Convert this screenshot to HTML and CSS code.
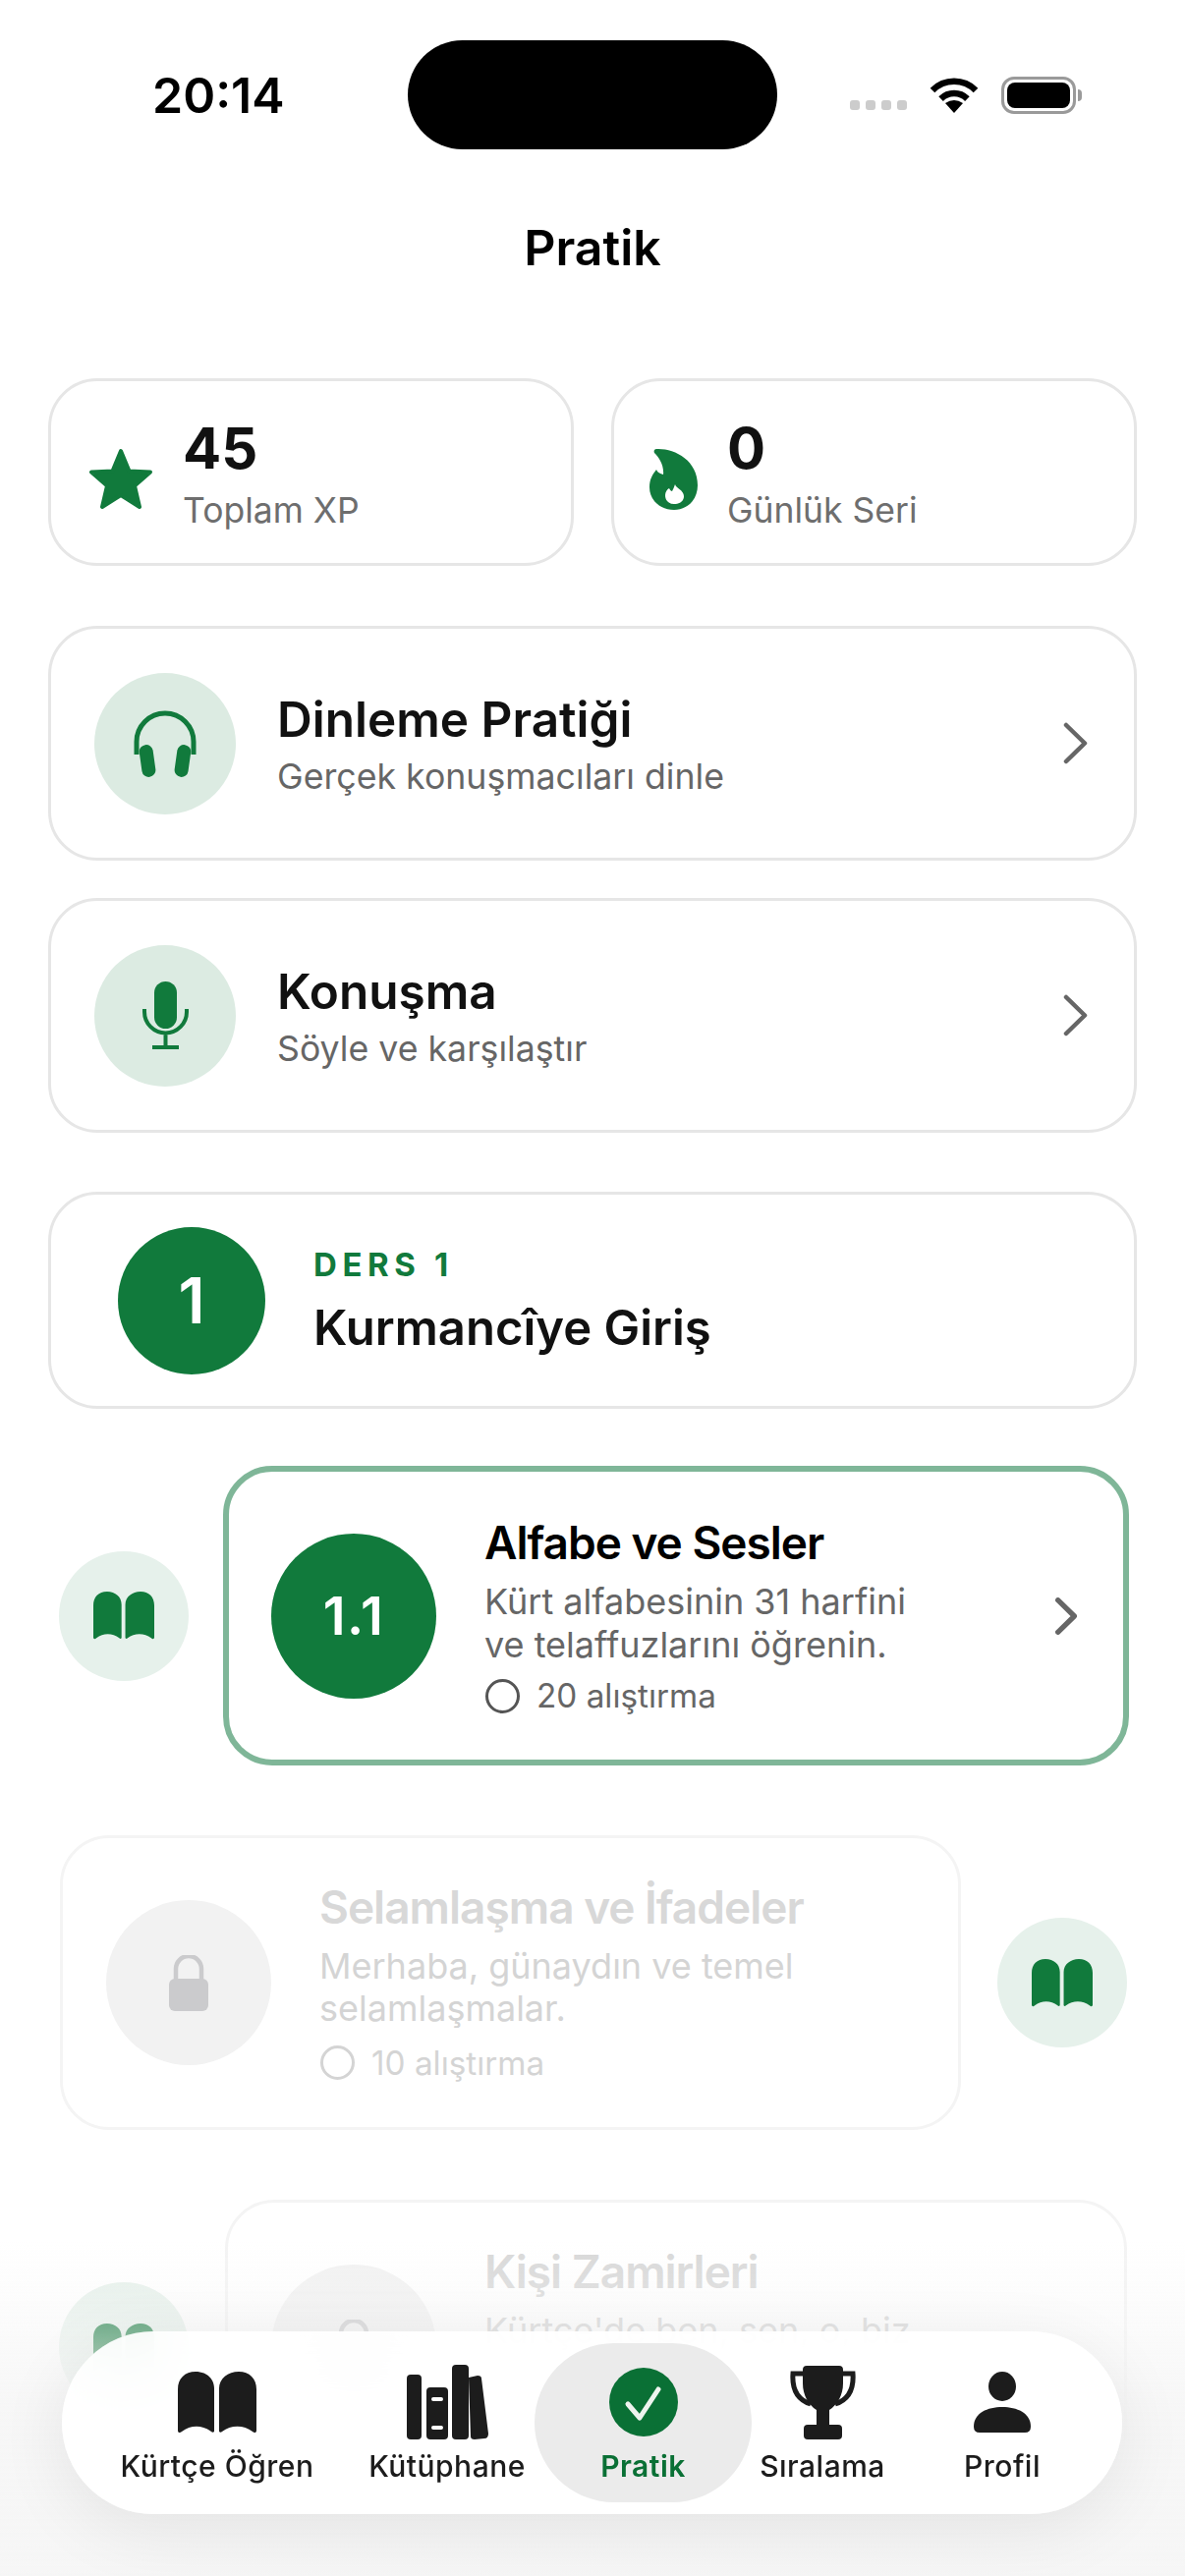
FILE: index.html
```html
<!DOCTYPE html>
<html lang="tr">
<head>
  <meta charset="UTF-8" />
  <meta name="viewport" content="width=device-width, initial-scale=1" />
  <title>Pratik</title>
  <link rel="stylesheet" href="styles.css">
</head>
<body>

  <svg class="defs" aria-hidden="true">
    <symbol id="book" viewBox="0 0 80 63">
      <path d="M0 60V18C0 7 7 0 18 0c11 0 19 7 19 17v44c-1 1-2 1-3 0-9-7-21-7-30 0-2 2-4 1-4-1z"/>
      <path d="M80 60V18C80 7 73 0 62 0c-11 0-20 7-20 17v44c1 1 2 1 3 0 9-7 22-7 31 0 2 2 4 1 4-1z"/>
    </symbol>
    <symbol id="chevron" viewBox="0 0 25 43">
      <path d="M3 3l19 18.500L3 40" stroke-linecap="round" stroke-linejoin="round"/>
    </symbol>
    <symbol id="lock" viewBox="0 0 40 57">
      <path d="M7 27V14a13 13 0 0 1 26 0v13" fill="none" stroke="currentColor" stroke-width="4.500"/>
      <rect y="24" width="40" height="33" rx="6"/>
    </symbol>
  </svg>

  <div class="status-bar">
    <div class="time">20:14</div>
    <div class="island"></div>
    <div class="status-icons">
      <div class="signal"><i></i><i></i><i></i><i></i></div>
      <svg class="wifi" viewBox="0 0 50 37">
        <path d="M3 14a31 31 0 0 1 44 0M11.600 22.600a19 19 0 0 1 26.800 0" fill="none" stroke="#000" stroke-width="6.500"/>
        <path d="M25 37l-9-10q9-6 18 0z"/>
      </svg>
      <div class="battery"><div class="battery-level"></div></div>
    </div>
  </div>

  <h1 class="page-title">Pratik</h1>

  <div class="content">
    <div class="stats">
      <div class="card stat">
        <svg class="stat-icon" width="66" height="63" viewBox="0 0 66 63">
          <polygon points="33,3 41.500,23.500 63,24.500 47,38.500 52,60 33,48 14,60 19,38.500 3,24.500 24.500,23.500" fill="#117a3c" stroke="#117a3c" stroke-width="4" stroke-linejoin="round"/>
        </svg>
        <div>
          <div class="stat-value">45</div>
          <div class="stat-label">Toplam XP</div>
        </div>
      </div>
      <div class="card stat">
        <svg class="stat-icon" width="50" height="63" viewBox="0 0 50 63">
          <path fill="#117a3c" fill-rule="evenodd" d="M7 1C25 0 49 12 49 38 49 53 38 63 25 63 11 63 0 53 0 40 0 32 3 27 7 22 8 25 11 26 14 27 15 18 10 10 5 5 4 3 5 1 7 1zM26 37C27 41 35 43 35 49 35 54 31 57 25 57 19 57 16 53 16 48 16 45 18 42 20 41 21 43 22 44 23 44 24 42 25 40 26 37z"/>
        </svg>
        <div>
          <div class="stat-value">0</div>
          <div class="stat-label">Günlük Seri</div>
        </div>
      </div>
    </div>

    <div class="card practice">
      <div class="practice-icon">
        <svg width="66" height="69" viewBox="0 0 66 69">
          <path d="M4 46V33a29 29 0 0 1 58 0v13" fill="none" stroke="#117a3c" stroke-width="5"/>
          <rect x="8" y="36" width="14" height="33" rx="7" fill="#117a3c" transform="rotate(-8 15 52)"/>
          <rect x="44" y="36" width="14" height="33" rx="7" fill="#117a3c" transform="rotate(8 51 52)"/>
        </svg>
      </div>
      <div class="practice-text">
        <div class="practice-title">Dinleme Pratiği</div>
        <div class="practice-sub">Gerçek konuşmacıları dinle</div>
      </div>
      <svg class="chevron"><use href="#chevron"/></svg>
    </div>

    <div class="card practice">
      <div class="practice-icon">
        <svg width="47" height="69" viewBox="0 0 47 69">
          <rect x="12" width="23" height="48" rx="11.500" fill="#117a3c"/>
          <path d="M2 28v3a21.500 21.500 0 0 0 43 0v-3M23.500 52v15M10 67h27" fill="none" stroke="#117a3c" stroke-width="4"/>
        </svg>
      </div>
      <div class="practice-text">
        <div class="practice-title">Konuşma</div>
        <div class="practice-sub">Söyle ve karşılaştır</div>
      </div>
      <svg class="chevron"><use href="#chevron"/></svg>
    </div>

    <div class="card unit">
      <div class="unit-num">1</div>
      <div>
        <div class="unit-label">DERS 1</div>
        <div class="unit-title">Kurmancîye Giriş</div>
      </div>
    </div>

    <div class="path">
      <div class="path-row path-row-current">
        <div class="book-badge"><svg><use href="#book"/></svg></div>
        <div class="lesson lesson-active">
          <div class="lesson-num">1.1</div>
          <div class="lesson-text">
            <div class="lesson-title">Alfabe ve Sesler</div>
            <div class="lesson-sub">Kürt alfabesinin 31 harfini<br>ve telaffuzlarını öğrenin.</div>
            <div class="lesson-count"><span class="ring"></span>20 alıştırma</div>
          </div>
          <svg class="chevron chevron-bold"><use href="#chevron"/></svg>
        </div>
      </div>

      <div class="path-row path-row-right">
        <div class="lesson lesson-locked">
          <div class="lesson-num"><svg class="lock"><use href="#lock"/></svg></div>
          <div class="lesson-text">
            <div class="lesson-title">Selamlaşma ve İfadeler</div>
            <div class="lesson-sub">Merhaba, günaydın ve temel<br>selamlaşmalar.</div>
            <div class="lesson-count"><span class="ring"></span>10 alıştırma</div>
          </div>
        </div>
        <div class="book-badge"><svg><use href="#book"/></svg></div>
      </div>

      <div class="path-row">
        <div class="book-badge"><svg><use href="#book"/></svg></div>
        <div class="lesson lesson-locked">
          <div class="lesson-num"><svg class="lock"><use href="#lock"/></svg></div>
          <div class="lesson-text">
            <div class="lesson-title">Kişi Zamirleri</div>
            <div class="lesson-sub">Kürtçe'de ben, sen, o, biz<br>zamirlerini öğrenin.</div>
            <div class="lesson-count"><span class="ring"></span>12 alıştırma</div>
          </div>
        </div>
      </div>
    </div>
  </div>

  <div class="bottom-fade"></div>

  <nav class="tabbar">
    <div class="tab">
      <div class="tab-icon">
        <svg width="80" height="63"><use href="#book"/></svg>
      </div>
      <span>Kürtçe Öğren</span>
    </div>
    <div class="tab">
      <div class="tab-icon">
        <svg width="83" height="76" viewBox="0 0 83 76">
          <rect y="10" width="15" height="66" rx="4"/>
          <path fill-rule="evenodd" d="M24 23h14a4 4 0 0 1 4 4v45a4 4 0 0 1-4 4H24a4 4 0 0 1-4-4V27a4 4 0 0 1 4-4zm3 10a2 2 0 0 0 0 4h8a2 2 0 0 0 0-4zm0 29a2 2 0 0 0 0 4h8a2 2 0 0 0 0-4z"/>
          <rect x="46" width="17" height="76" rx="4"/>
          <path d="M63 13l9-2q4 0 4 3l7 56q0 5-4 5l-10 1q-4 0-4-3z"/>
        </svg>
      </div>
      <span>Kütüphane</span>
    </div>
    <div class="tab tab-active">
      <div class="tab-icon">
        <svg width="70" height="70" viewBox="0 0 70 70">
          <circle cx="35" cy="35" r="35" fill="#0a7035"/>
          <path d="M19 37l12 14 19-29" fill="none" stroke="#eef4ef" stroke-width="5" stroke-linecap="round" stroke-linejoin="round"/>
        </svg>
      </div>
      <span>Pratik</span>
    </div>
    <div class="tab">
      <div class="tab-icon">
        <svg width="67" height="75" viewBox="0 0 67 75">
          <path d="M15 8H3C2 22 6 34 21 39M52 8h12c1 14-3 26-18 31" fill="none" stroke="#1c1c1c" stroke-width="5"/>
          <path d="M13 4q0-4 4-4h33q4 0 4 4v14c0 12-6 22-14 27v17H27V45c-8-5-14-15-14-27z"/>
          <rect x="14" y="60" width="39" height="15" rx="4"/>
        </svg>
      </div>
      <span>Sıralama</span>
    </div>
    <div class="tab">
      <div class="tab-icon">
        <svg width="58" height="62" viewBox="0 0 58 62">
          <ellipse cx="29" cy="15" rx="14" ry="15"/>
          <path d="M0 56C0 42 14 36 29 36s29 6 29 20q0 6-6 6H6q-6 0-6-6z"/>
        </svg>
      </div>
      <span>Profil</span>
    </div>
  </nav>

</body>
</html>
```

FILE: styles.css
```css
* {
  box-sizing: border-box;
}

html, body {
  margin: 0;
  padding: 0;
  height: 2622px;
  overflow: hidden;
  background: #fff;
}

body {
  font-family: Inter, 'Noto Sans', sans-serif;
  color: #111;
}

.defs {
  display: none;
}

/* status bar */
.status-bar {
  display: grid;
  grid-template-columns: 415px 376px 1fr;
  align-items: center;
  padding-top: 41px;
}

.time {
  padding-left: 155px;
  font-size: 50px;
  font-weight: 600;
  color: #000;
}

.island {
  height: 111px;
  background: #000;
  border-radius: 56px;
}

.status-icons {
  display: flex;
  align-items: center;
  padding-left: 74px;
}

.signal {
  display: flex;
  gap: 6px;
  margin-top: 20px;
}

.signal i {
  width: 10px;
  height: 10px;
  border-radius: 3px;
  background: #ccc;
}

.wifi {
  width: 50px;
  height: 37px;
  margin: 0 23px 0 23px;
}

.battery {
  position: relative;
  width: 76px;
  height: 38px;
  padding: 3px;
  border: 3px solid #9a9a9a;
  border-radius: 13px;
}

.battery::after {
  content: "";
  position: absolute;
  right: -9px;
  top: 10px;
  width: 4px;
  height: 12px;
  background: #9a9a9a;
  border-radius: 0 4px 4px 0;
}

.battery-level {
  height: 100%;
  background: #000;
  border-radius: 8px;
}

.page-title {
  margin: 69px 0 102px;
  font-size: 50px;
  line-height: 62px;
  font-weight: 600;
  text-align: center;
  color: #000;
}

/* cards */
.content {
  padding: 0 49px;
}

.card {
  background: #fff;
  border: 3px solid #e6e6e6;
  border-radius: 50px;
}

.stats {
  display: grid;
  grid-template-columns: 535px 535px;
  gap: 38px;
  margin-bottom: 61px;
}

.stat {
  display: flex;
  align-items: center;
  height: 191px;
  padding-left: 38px;
  gap: 30px;
}

.stat:nth-child(2) {
  gap: 29px;
  padding-left: 36px;
}

.stat-icon {
  margin-top: 14px;
  flex-shrink: 0;
}

.stat-value {
  margin-top: 5px;
  font-size: 58px;
  line-height: 62px;
  font-weight: 700;
}

.stat-label {
  margin-top: 11px;
  font-size: 35.500px;
  line-height: 44px;
  color: #6e6e6e;
}

.practice {
  display: flex;
  align-items: center;
  height: 239px;
  padding: 0 47px 0 44px;
  margin-bottom: 38px;
}

.practice-icon {
  display: flex;
  align-items: center;
  justify-content: center;
  width: 144px;
  height: 144px;
  border-radius: 50%;
  background: #dcebe2;
  flex-shrink: 0;
}

.practice-text {
  flex: 1;
  margin-left: 42px;
  padding-top: 1px;
}

.practice-title {
  font-size: 49.500px;
  line-height: 62px;
  font-weight: 600;
}

.practice-sub {
  margin-top: 4px;
  font-size: 35.700px;
  line-height: 46px;
  color: #666;
}

.chevron {
  width: 25px;
  height: 43px;
  color: #666;
  fill: none;
  stroke: currentColor;
  stroke-width: 4.500;
  flex-shrink: 0;
}

.unit {
  display: flex;
  align-items: center;
  gap: 49px;
  height: 221px;
  padding-left: 68px;
  margin: 60px 0 58px;
}

.unit-num {
  display: flex;
  align-items: center;
  justify-content: center;
  width: 150px;
  height: 150px;
  border-radius: 50%;
  background: #117a3c;
  color: #fff;
  font-size: 64px;
  font-weight: 600;
}

.unit-label {
  margin-top: 2px;
  font-size: 33px;
  line-height: 42px;
  font-weight: 700;
  letter-spacing: 5.600px;
  color: #117a3c;
}

.unit-title {
  margin-top: 13px;
  font-size: 49px;
  line-height: 62px;
  font-weight: 600;
}

/* lesson path */
.path {
  display: flex;
  flex-direction: column;
  gap: 71px;
  margin: 0 10px 0 11px;
}

.path-row {
  display: flex;
  align-items: center;
  gap: 37px;
}

.path-row-current {
  gap: 35px;
}

.path-row-right {
  gap: 37px;
  padding-left: 1px;
}

.book-badge {
  display: flex;
  align-items: center;
  justify-content: center;
  width: 132px;
  height: 132px;
  border-radius: 50%;
  background: #e6f1eb;
  flex-shrink: 0;
}

.book-badge svg {
  width: 62px;
  height: 49px;
  fill: #117a3c;
}

.lesson {
  flex: 1;
  display: flex;
  align-items: center;
  min-height: 300px;
  background: #fff;
  border-radius: 50px;
  padding-left: 44px;
}

.lesson-active {
  min-height: 305px;
  margin-right: -2px;
  padding-left: 43px;
  border: 6px solid #7fb698;
}

.lesson-locked {
  border: 3px solid #f4f4f4;
}

.lesson-num {
  display: flex;
  align-items: center;
  justify-content: center;
  width: 168px;
  height: 168px;
  border-radius: 50%;
  background: #117a3c;
  color: #fff;
  font-size: 54px;
  font-weight: 600;
  letter-spacing: 1.500px;
  flex-shrink: 0;
}

.lesson-text {
  flex: 1;
  margin-left: 49px;
}

.lesson-title {
  font-size: 46px;
  line-height: 58px;
  font-weight: 600;
  letter-spacing: -1px;
  color: #000;
  margin-bottom: 10px;
}

.lesson-sub {
  font-size: 36px;
  line-height: 43.500px;
  color: #666;
}

.lesson-count {
  display: flex;
  align-items: center;
  gap: 17px;
  margin-top: 8px;
  font-size: 33.300px;
  line-height: 44px;
  color: #666;
}

.ring {
  width: 35px;
  height: 35px;
  margin-left: 1px;
  border: 3px solid #555;
  border-radius: 50%;
}

.chevron-bold {
  width: 22px;
  height: 38px;
  margin-right: 47px;
  stroke-width: 6;
}

.lesson-locked .lesson-text {
  padding-bottom: 3px;
}

.lesson-locked .lesson-count {
  margin-top: 11px;
}

.lesson-locked .lesson-num {
  background: #f2f2f2;
}

.lesson-locked .lesson-title {
  color: #d8d8d8;
}

.lesson-locked .lesson-sub,
.lesson-locked .lesson-count {
  color: #d4d4d4;
}

.lesson-locked .ring {
  border-color: #d4d4d4;
}

.lock {
  width: 40px;
  height: 57px;
  fill: #cbcbcd;
  color: #cbcbcd;
}

/* bottom tab bar, floats over the list */
.bottom-fade {
  position: fixed;
  left: 0;
  right: 0;
  bottom: 0;
  height: 340px;
  background: linear-gradient(rgba(246, 246, 246, 0), rgba(246, 246, 246, 0.9) 50%, #f6f6f6);
}

.tabbar {
  position: fixed;
  left: 63px;
  right: 64px;
  bottom: 63px;
  display: grid;
  grid-template-columns: 290px 178px 221px 144px 222px;
  height: 186px;
  padding: 12px 11px 12px 13px;
  background: rgba(255, 255, 255, 0.92);
  backdrop-filter: blur(24px);
  border-radius: 93px;
  box-shadow: 0 16px 70px rgba(0, 0, 0, 0.08);
}

.tab {
  display: flex;
  flex-direction: column;
  align-items: center;
  justify-content: flex-end;
  padding-bottom: 19px;
  font-size: 30px;
  line-height: 36px;
  font-weight: 500;
  letter-spacing: 0.5px;
  color: #1c1c1c;
  border-radius: 81px;
}

.tab-icon {
  display: flex;
  align-items: center;
  height: 76px;
  margin-bottom: 9px;
  fill: #1c1c1c;
}

.tab-active {
  background: #ebebeb;
  color: #0a7035;
  font-weight: 600;
}
```
